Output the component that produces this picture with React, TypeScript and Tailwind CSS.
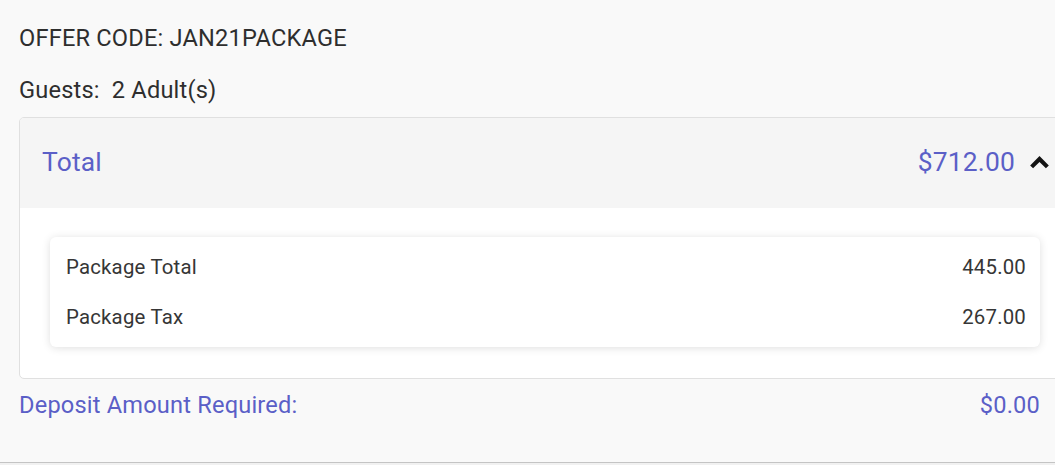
import React from "react";

const BREAKDOWN = [
  { label: "Package Total", value: "445.00" },
  { label: "Package Tax", value: "267.00" },
];

function ExpandLess() {
  return (
    <svg width="35" height="35" viewBox="0 0 24 24" className="shrink-0" aria-hidden>
      <path d="M12 7.6L5.6 14l2 2L12 11.6 16.4 16l2-2z" fill="#141414" />
    </svg>
  );
}

export default function App() {
  return (
    <div className="w-[1055px] h-[465px] overflow-hidden bg-[#f9f9f9] flex flex-col font-['Roboto','Liberation_Sans',sans-serif] tracking-[0.012em]">
      <div className="pl-[19px] w-[1100px]">
        {/* Offer + guests */}
        <p className="pt-[25px] text-[23.6px] leading-[26px] text-[#2e2e2e]">
          OFFER CODE: JAN21PACKAGE
        </p>
        <p className="mt-[26px] text-[23.6px] leading-[26px] text-[#2e2e2e] whitespace-pre">
          Guests:  2 Adult(s)
        </p>

        {/* Total card */}
        <div className="mt-[14px] w-[1053px] rounded-[5px] border border-[#e0e0e0] bg-white overflow-hidden">
          <div className="h-[90px] bg-[#f5f5f5] flex items-center justify-between pl-[22px] pr-[14px]">
            <span className="text-[26.4px] text-[#5b5fc7]">Total</span>
            <div className="flex items-center gap-[7px]">
              <span className="text-[26.4px] text-[#5b5fc7]">$712.00</span>
              <ExpandLess />
            </div>
          </div>
          <div className="pt-[29px] pb-[31px] pl-[30px] pr-[31px]">
            <div className="rounded-[6px] bg-white shadow-[0_1px_9px_rgba(0,0,0,0.13)] py-[5px] pl-[16px] pr-[14px]">
              {BREAKDOWN.map((row) => (
                <div key={row.label} className="h-[50px] flex items-center justify-between text-[20.4px] text-[#363636]">
                  <span>{row.label}</span>
                  <span>{row.value}</span>
                </div>
              ))}
            </div>
          </div>
        </div>

        {/* Deposit */}
        <div className="mt-[13px] w-[1021px] flex items-center justify-between text-[23.6px] leading-[26px] text-[#5b5fc7]">
          <span>Deposit Amount Required:</span>
          <span>$0.00</span>
        </div>
      </div>

      <div className="mt-auto h-[3px] border-t border-[#c4c4c4] bg-[#f1f1f1]" />
    </div>
  );
}
